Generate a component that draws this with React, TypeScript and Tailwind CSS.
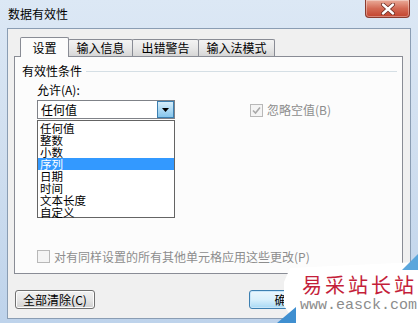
import React from "react"

const items = ["任何值", "整数", "小数", "序列", "日期", "时间", "文本长度", "自定义"]

const Check = ({ checked }: { checked?: boolean }) => (
  <span className="flex h-[13px] w-[13px] shrink-0 items-center justify-center border border-[#b8b8b8] bg-[#f4f4f4]">
    {checked && (
      <svg width="9" height="9" viewBox="0 0 9 9">
        <path d="M1 4.5 L3.5 7 L8 1.5" fill="none" stroke="#a8a8a8" strokeWidth="1.6" />
      </svg>
    )}
  </span>
)

const CloseButton = () => (
  <div className="mr-[8px] flex h-[18px] w-[45px] items-center justify-center rounded-b-[4px] border border-t-0 border-[#8a3b2e] bg-gradient-to-b from-[#e9ab9a] via-[#d36a55] to-[#c2422c] shadow-[inset_0_0_0_1px_rgba(255,255,255,0.35)]">
    <svg width="14" height="12" viewBox="0 0 14 12">
      <path d="M2 1.5 L12 10.5 M12 1.5 L2 10.5" stroke="#6b2a20" strokeWidth="4" strokeLinecap="round" />
      <path d="M2 1.5 L12 10.5 M12 1.5 L2 10.5" stroke="#ffffff" strokeWidth="2.4" strokeLinecap="round" />
    </svg>
  </div>
)

const Tab = ({ label, w, active }: { label: string; w: string; active?: boolean }) =>
  active ? (
    <div className={`relative z-10 -mb-px flex h-[20px] items-center justify-center rounded-t-[2px] border border-b-0 border-[#898c95] bg-[#fcfcfc] ${w}`}>
      {label}
    </div>
  ) : (
    <div className={`-ml-px flex h-[17px] items-center justify-center rounded-t-[2px] border border-b-0 border-[#898c95] bg-gradient-to-b from-[#f3f3f3] via-[#e8e8e8] to-[#d6d6d6] ${w}`}>
      {label}
    </div>
  )

const Button = ({ label, w, primary }: { label: string; w: string; primary?: boolean }) => (
  <div
    className={`flex h-[19px] items-center justify-center rounded-[3px] border ${
      primary
        ? "border-[#3c7fb1] bg-gradient-to-b from-[#eaf6fd] via-[#d9f0fc] to-[#a7d9f5] shadow-[inset_0_0_0_1px_#c8e6f9]"
        : "border-[#707070] bg-gradient-to-b from-[#f2f2f2] via-[#e6e6e6] to-[#cfcfcf] shadow-[inset_0_0_0_1px_#fcfcfc]"
    } ${w}`}
  >
    {label}
  </div>
)

export default function App() {
  return (
    <div className="relative flex h-[323px] w-[418px] flex-col overflow-hidden bg-gradient-to-b from-[#dce8f5] via-[#cfdeef] to-[#bed3eb] font-['Noto_Sans_CJK_SC',sans-serif] text-[12px] leading-[12px] text-black">
      {/* title bar */}
      <div className="flex h-[28px] shrink-0 items-start justify-between">
        <div className="pl-[8px] pt-[8px]">数据有效性</div>
        <CloseButton />
      </div>

      {/* client area */}
      <div className="mb-[4px] ml-[7px] mr-[7px] flex flex-1 flex-col border border-[#8a9db3] bg-[#f0f0f0] pl-[6px] pr-[7px] pt-[8px]">
        <div className="flex items-end pl-[6px]">
          <Tab label="设置" w="w-[49px]" active />
          <Tab label="输入信息" w="w-[65px]" />
          <Tab label="出错警告" w="w-[67px]" />
          <Tab label="输入法模式" w="w-[77px]" />
        </div>

        {/* tab panel */}
        <div className="flex h-[218px] flex-col border border-[#898c95] bg-[#fcfcfc]">
          <div className="mt-[8px] flex items-center pl-[7px] pr-[5px]">
            <span>有效性条件</span>
            <span className="ml-[4px] h-px flex-1 bg-[#d5dfe5]" />
          </div>

          <div className="mt-[7px] flex pl-[22px]">
            <div className="w-[138px]">
              <div className="h-[12px]">允许(A):</div>
              <div className="relative mt-[4px] flex h-[19px] items-center border border-[#7f8288] bg-white">
                <span className="flex-1 pl-[3px]">任何值</span>
                <span className="flex h-[17px] w-[17px] items-center justify-center border border-[#3c7fb1] bg-gradient-to-b from-[#d6eefb] to-[#86c6ec]">
                  <svg width="7" height="4" viewBox="0 0 7 4">
                    <path d="M0 0 H7 L3.5 4 Z" fill="#000" />
                  </svg>
                </span>
                {/* open dropdown */}
                <div className="absolute left-[-1px] top-[19px] z-20 flex h-[98px] w-[138px] flex-col border border-[#646464] bg-white py-px">
                  {items.map((it) => (
                    <div key={it} className={`h-[12px] pl-[2px] text-[11.5px] leading-[12px] ${it === "序列" ? "bg-[#3399ff] text-white" : ""}`}>
                      {it}
                    </div>
                  ))}
                </div>
              </div>
            </div>
            <div className="ml-[75px] mt-[17px] flex items-center gap-[4px] text-[#8d8d8d]">
              <Check checked />
              <span>忽略空值(B)</span>
            </div>
          </div>

          <div className="mb-[10px] mt-auto flex items-center gap-[4px] pl-[22px] text-[#8d8d8d]">
            <Check />
            <span>对有同样设置的所有其他单元格应用这些更改(P)</span>
          </div>
        </div>

        <div className="mt-[16px] flex justify-between pl-[1px]">
          <Button label="全部清除(C)" w="w-[80px]" />
          <div className="flex gap-[6px]">
            <Button label="确定" w="w-[75px]" primary />
            <Button label="取消" w="w-[73px]" />
          </div>
        </div>
      </div>

      {/* watermark overlay */}
      <div className="absolute left-[276px] top-[252px] h-[71px] w-[142px]">
        <svg width="142" height="71" viewBox="0 0 142 71" className="absolute left-0 top-0">
          <path d="M14 16 L142 10 L142 71 L20 71 L8 54 L8 30 Z" fill="#ffffff" />
          <path d="M126 18 L142 2 L142 18 Z" fill="#5aa6dc" />
          <path d="M1 71 L20 71 L20 55 Z" fill="#3f8fd0" />
        </svg>
        <div className="absolute left-[26px] top-[23px] whitespace-nowrap text-[20px] leading-[20px] tracking-[3px] text-[#c41e3a]">易采站长站</div>
        <div className="absolute left-[24px] top-[47px] whitespace-nowrap font-['Liberation_Mono',monospace] text-[15px] leading-[14px] text-[#8c8c8c]">www.easck.com</div>
      </div>
    </div>
  )
}
